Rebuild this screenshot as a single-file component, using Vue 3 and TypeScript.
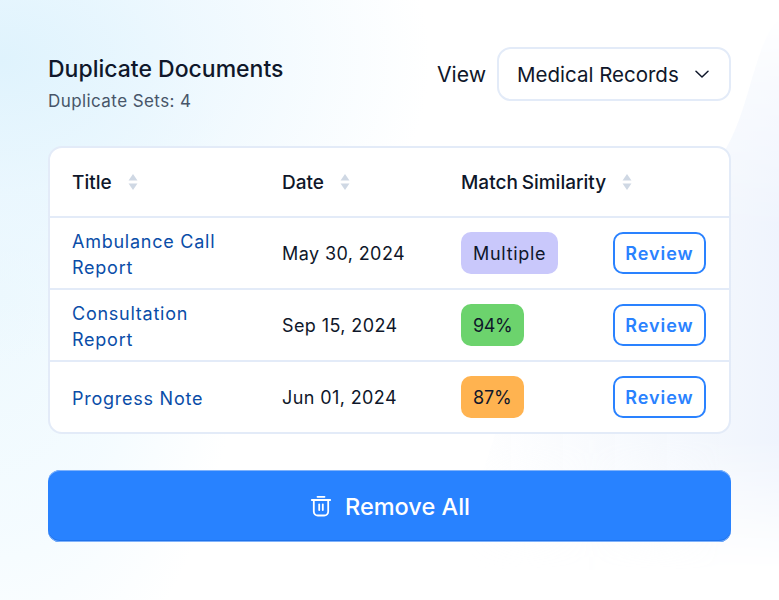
<template>
  <div class="page">
    <div class="bg-shape"></div>
    <div class="content">
      <header class="head">
        <div>
          <h1 class="title">Duplicate Documents</h1>
          <p class="subtitle">Duplicate Sets: 4</p>
        </div>
        <div class="view">
          <span class="view-label">View</span>
          <div class="select">
            <span>Medical Records</span>
            <svg class="chevron" width="14" height="14" viewBox="0 0 14 14" fill="none">
              <path d="M1 4.2 7 10l6-5.8" stroke="#0f172a" stroke-width="1.5" stroke-linecap="round" stroke-linejoin="round" />
            </svg>
          </div>
        </div>
      </header>

      <div class="table">
        <div class="row row-head">
          <div v-for="col in columns" :key="col" class="th">
            <span>{{ col }}</span>
            <svg class="sort" width="10" height="16" viewBox="0 0 10 16">
              <path d="M5 0 9.5 6.5h-9z" fill="#cfd8e4" />
              <path d="M5 16 .5 9.5h9z" fill="#cfd8e4" />
            </svg>
          </div>
          <div></div>
        </div>
        <div v-for="doc in docs" :key="doc.title" class="row">
          <a class="doc-title">{{ doc.title }}</a>
          <span class="date">{{ doc.date }}</span>
          <div class="badge-cell"><span class="badge" :class="doc.tone">{{ doc.match }}</span></div>
          <button class="review">Review</button>
        </div>
      </div>

      <button class="remove">
        <svg width="24" height="24" viewBox="0 0 24 24" fill="none" stroke="#fff" stroke-width="1.8" stroke-linecap="round" stroke-linejoin="round">
          <path d="M8.5 2.8h7" />
          <path d="M2.8 6h18.4" />
          <path d="M4.8 6v11.5a4 4 0 0 0 4 4h6.4a4 4 0 0 0 4-4V6" />
          <path d="M10.2 10.5v5.5" />
          <path d="M13.8 10.5v5.5" />
        </svg>
        <span>Remove All</span>
      </button>
    </div>
  </div>
</template>

<script setup lang="ts">
const columns = ['Title', 'Date', 'Match Similarity']

const docs = [
  { title: 'Ambulance Call Report', date: 'May 30, 2024', match: 'Multiple', tone: 'purple' },
  { title: 'Consultation Report', date: 'Sep 15, 2024', match: '94%', tone: 'green' },
  { title: 'Progress Note', date: 'Jun 01, 2024', match: '87%', tone: 'orange' }
]
</script>

<style>
html,
body {
  margin: 0;
  background: #fff;
}
</style>

<style scoped>
.page {
  position: relative;
  width: 779px;
  height: 600px;
  overflow: hidden;
  font-family: Inter, "Liberation Sans", sans-serif;
  color: #0f172a;
  background:
    radial-gradient(430px 300px at 0 60px, #dff3fd 0%, rgba(232, 246, 254, 0.75) 45%, rgba(255, 255, 255, 0) 100%),
    radial-gradient(240px 420px at 0 300px, #eef9fe 0%, rgba(240, 250, 255, 0.7) 55%, rgba(255, 255, 255, 0) 100%),
    #fff;
}

.bg-shape {
  position: absolute;
  inset: 0;
  background: linear-gradient(to left, #eff4fd 0, #f3f7fd 60px, rgba(255, 255, 255, 0) 320px);
  clip-path: path("M779 20 C755 40 750 110 725 150 C690 210 640 300 500 420 L440 600 L779 600 Z");
  -webkit-mask-image: linear-gradient(to bottom, transparent 15px, rgba(0, 0, 0, 0.5) 90px, #000 230px, #000 440px, transparent 570px);
  mask-image: linear-gradient(to bottom, transparent 15px, rgba(0, 0, 0, 0.5) 90px, #000 230px, #000 440px, transparent 570px);
}

.content {
  position: relative;
  padding: 47px 48px 0;
}

.head {
  display: flex;
  justify-content: space-between;
  align-items: flex-start;
  height: 99px;
}

.title {
  margin: 7px 0 0;
  font-size: 23px;
  font-weight: 500;
  line-height: 30px;
}

.subtitle {
  margin: 6px 0 0;
  font-size: 17px;
  line-height: 22px;
  letter-spacing: 0.42px;
  color: #475569;
}

.view {
  display: flex;
  align-items: center;
  gap: 11px;
}

.view-label {
  font-size: 21.2px;
}

.select {
  display: flex;
  align-items: center;
  gap: 16px;
  box-sizing: border-box;
  width: 234px;
  height: 54px;
  padding: 0 18px;
  font-size: 20.5px;
  background: #fff;
  border: 2px solid #e3ebf8;
  border-radius: 14px;
  white-space: nowrap;
}

.chevron {
  flex-shrink: 0;
}

.table {
  overflow: hidden;
  background: #fff;
  border: 2px solid #e3ebf8;
  border-radius: 14px;
}

.row {
  display: grid;
  grid-template-columns: 210px 179px 152px 1fr;
  align-items: center;
  box-sizing: border-box;
  height: 72px;
  padding: 0 23px 0 22px;
  border-top: 2px solid #e3ebf8;
  font-size: 18px;
  letter-spacing: 0.4px;
}

.row-head {
  height: 68px;
  border-top: 0;
  font-size: 19px;
  font-weight: 500;
  letter-spacing: 0;
  word-spacing: -1.2px;
}

.th {
  display: flex;
  align-items: center;
  gap: 16px;
  white-space: nowrap;
}

.sort {
  flex-shrink: 0;
}

.doc-title {
  width: 170px;
  padding-top: 4px;
  color: #0a4da8;
  line-height: 26px;
  letter-spacing: 0.75px;
}

.badge-cell {
  display: flex;
}

.badge {
  height: 42px;
  padding: 0 12px;
  line-height: 43px;
  border-radius: 10px;
}

.purple {
  background: #c9c8fb;
  letter-spacing: 0.7px;
}

.green {
  background: #6cd36d;
  letter-spacing: -0.4px;
}

.orange {
  background: #ffb350;
  letter-spacing: -0.1px;
}

.review {
  justify-self: end;
  box-sizing: border-box;
  width: 93px;
  height: 42px;
  padding: 0;
  font: 600 18px Inter, "Liberation Sans", sans-serif;
  letter-spacing: 0.95px;
  color: #2a82ff;
  background: #fff;
  border: 2px solid #2a82ff;
  border-radius: 10px;
}

.remove {
  display: flex;
  align-items: center;
  justify-content: center;
  gap: 12px;
  box-sizing: border-box;
  width: 100%;
  height: 72px;
  margin-top: 36px;
  font: 500 23.5px Inter, "Liberation Sans", sans-serif;
  color: #fff;
  background: #2882ff;
  border: 0;
  border-radius: 12px;
  box-shadow: inset 0 1px 0 #7fb2fb, inset 0 -1px 0 #7fb2fb, inset 0 -2px 0 #1f72ea;
}
</style>
